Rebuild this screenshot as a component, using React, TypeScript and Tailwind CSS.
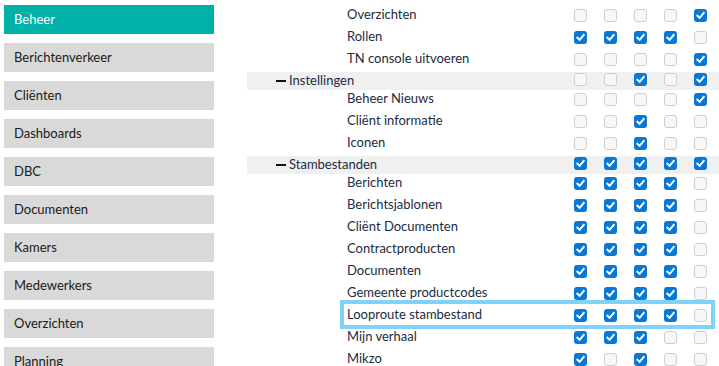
const menu = [
  "Beheer",
  "Berichtenverkeer",
  "Cliënten",
  "Dashboards",
  "DBC",
  "Documenten",
  "Kamers",
  "Medewerkers",
  "Overzichten",
  "Planning",
  "Rapportages",
];

type Row = { label: string; header?: boolean; checks: number[]; focus?: boolean };

const rows: Row[] = [
  { label: "Overzichten", checks: [0, 0, 0, 0, 1] },
  { label: "Rollen", checks: [1, 1, 1, 1, 0] },
  { label: "TN console uitvoeren", checks: [0, 0, 0, 0, 1] },
  { label: "Instellingen", header: true, checks: [0, 0, 1, 0, 1] },
  { label: "Beheer Nieuws", checks: [0, 0, 0, 0, 1] },
  { label: "Cliënt informatie", checks: [0, 0, 1, 0, 0] },
  { label: "Iconen", checks: [0, 0, 1, 0, 0] },
  { label: "Stambestanden", header: true, checks: [1, 1, 1, 1, 1] },
  { label: "Berichten", checks: [1, 1, 1, 1, 0] },
  { label: "Berichtsjablonen", checks: [1, 1, 1, 1, 0] },
  { label: "Cliënt Documenten", checks: [1, 1, 1, 1, 0] },
  { label: "Contractproducten", checks: [1, 1, 1, 1, 0] },
  { label: "Documenten", checks: [1, 1, 1, 1, 0] },
  { label: "Gemeente productcodes", checks: [1, 1, 1, 1, 0] },
  { label: "Looproute stambestand", checks: [1, 1, 1, 1, 0], focus: true },
  { label: "Mijn verhaal", checks: [1, 1, 1, 0, 0] },
  { label: "Mikzo", checks: [1, 0, 1, 0, 0] },
];

function Check({ on }: { on: boolean }) {
  if (!on) {
    return <span className="block w-[13px] h-[13px] rounded-[3px] border border-[#cfcfcf] bg-[#f7f7f7]" />;
  }
  return (
    <span className="flex items-center justify-center w-[13px] h-[13px] rounded-[3px] bg-[#0a78d2]">
      <svg width="9" height="9" viewBox="0 0 10 10">
        <path d="M1.5 5.3 L4 7.6 L8.6 2.2" fill="none" stroke="white" strokeWidth="2.2" strokeLinecap="square" />
      </svg>
    </span>
  );
}

export default function App() {
  return (
    <div className="flex h-[366px] overflow-hidden bg-white text-[13px]" style={{ fontFamily: "Lato, 'Noto Sans', sans-serif" }}>
      <div className="w-[214px] shrink-0 pl-[4px] pt-[5px] flex flex-col gap-[9px]">
        {menu.map((m, i) => (
          <div
            key={m}
            className={
              i === 0
                ? "h-[29px] shrink-0 flex items-center pl-[10px] bg-[#00b1a7] text-white"
                : "h-[29px] shrink-0 flex items-center pl-[10px] bg-[#d9d9d9] text-[#1a1a1a]"
            }
          >
            {m}
          </div>
        ))}
      </div>

      <div className="ml-[33px] flex-1 pt-[4px] text-[#1c2c40]">
        {rows.map((r) =>
          r.header ? (
            <div key={r.label} className="flex items-center h-[18px] mt-[2px] -mb-[2px] bg-[#f0f0f0]">
              <div className="flex items-center w-[318px] pl-[29px]">
                <span className="w-[10px] h-[2px] bg-[#111] mr-[3px]" />
                <span>{r.label}</span>
              </div>
              <div className="flex self-start mt-[1px]">
                {r.checks.map((c, j) => (
                  <div key={j} className="w-[30px] flex justify-center">
                    <Check on={c === 1} />
                  </div>
                ))}
              </div>
            </div>
          ) : (
            <div key={r.label} className="relative flex items-center h-[22px]">
              <div className="w-[318px] pl-[100px]">{r.label}</div>
              <div className="flex">
                {r.checks.map((c, j) => (
                  <div key={j} className="w-[30px] flex justify-center">
                    <Check on={c === 1} />
                  </div>
                ))}
              </div>
              {r.focus && (
                <div className="absolute left-[93px] right-[4px] top-[-4px] bottom-[-3px] border-4 border-[#7fd3fb] pointer-events-none" />
              )}
            </div>
          )
        )}
      </div>
    </div>
  );
}
